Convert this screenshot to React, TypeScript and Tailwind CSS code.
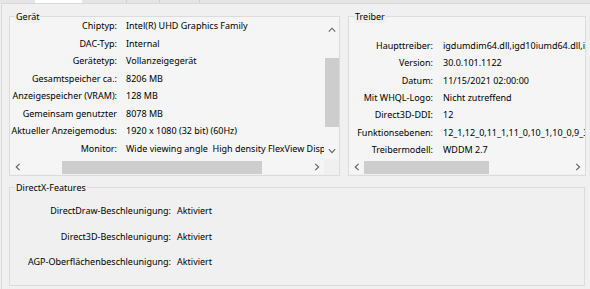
import React from "react";

type Row = { label: string; value: string };

const deviceRows: Row[] = [
  { label: "Chiptyp:", value: "Intel(R) UHD Graphics Family" },
  { label: "DAC-Typ:", value: "Internal" },
  { label: "Gerätetyp:", value: "Vollanzeigegerät" },
  { label: "Gesamtspeicher ca.:", value: "8206 MB" },
  { label: "Anzeigespeicher (VRAM):", value: "128 MB" },
  { label: "Gemeinsam genutzter", value: "8078 MB" },
  { label: "Aktueller Anzeigemodus:", value: "1920 x 1080 (32 bit) (60Hz)" },
  { label: "Monitor:", value: "Wide viewing angle  High density FlexView Display" },
];

const driverRows: Row[] = [
  { label: "Haupttreiber:", value: "igdumdim64.dll,igd10iumd64.dll,igd10iumd64.dll,igd12umd64.dll" },
  { label: "Version:", value: "30.0.101.1122" },
  { label: "Datum:", value: "11/15/2021 02:00:00" },
  { label: "Mit WHQL-Logo:", value: "Nicht zutreffend" },
  { label: "Direct3D-DDI:", value: "12" },
  { label: "Funktionsebenen:", value: "12_1,12_0,11_1,11_0,10_1,10_0,9_3,9_2,9_1" },
  { label: "Treibermodell:", value: "WDDM 2.7" },
];

const featureRows: Row[] = [
  { label: "DirectDraw-Beschleunigung:", value: "Aktiviert" },
  { label: "Direct3D-Beschleunigung:", value: "Aktiviert" },
  { label: "AGP-Oberflächenbeschleunigung:", value: "Aktiviert" },
];

function Chevron({ dir }: { dir: "up" | "down" | "left" | "right" }) {
  const vertical = dir === "up" || dir === "down";
  const points = {
    up: "0.8,4.6 4,1.2 7.2,4.6",
    down: "0.8,1.2 4,4.6 7.2,1.2",
    left: "4.6,0.8 1.2,4 4.6,7.2",
    right: "1.2,0.8 4.6,4 1.2,7.2",
  }[dir];
  return (
    <svg width={vertical ? 8 : 6} height={vertical ? 6 : 8} viewBox={vertical ? "0 0 8 6" : "0 0 6 8"}>
      <polyline points={points} fill="none" stroke="#606060" strokeWidth="1.1" />
    </svg>
  );
}

function HScrollbar({ thumbLeft, thumbWidth }: { thumbLeft: number; thumbWidth: number }) {
  return (
    <div className="flex h-[15px] shrink-0 items-center">
      <div className="flex w-[15px] shrink-0 justify-center">
        <Chevron dir="left" />
      </div>
      <div className="relative h-full flex-1">
        <div
          className="absolute top-[2px] bottom-0 bg-[#cdcdcd]"
          style={{ left: thumbLeft, width: thumbWidth }}
        />
      </div>
      <div className="flex w-[15px] shrink-0 justify-center">
        <Chevron dir="right" />
      </div>
    </div>
  );
}

function GroupBox({
  title,
  className,
  children,
}: {
  title: string;
  className?: string;
  children: React.ReactNode;
}) {
  return (
    <div className={`flex flex-col border border-[#dcdcdc] ${className ?? ""}`}>
      <div className="relative z-10 -mt-[7px] -mb-[6px] ml-[5px] w-fit bg-[#f0f0f0] px-px leading-[13px]">
        {title}
      </div>
      {children}
    </div>
  );
}

export default function App() {
  return (
    <div className="h-[289px] w-[590px] overflow-hidden bg-[#f0f0f0] font-['Noto_Sans',sans-serif] text-[9px] text-black">
      {/* tab strip remnant */}
      <div className="flex h-[3px] bg-[#e5e5e5]">
        <div className="w-[35px]" />
        <div className="w-[47px] bg-white" />
        <div className="w-[45px] border-r border-[#cfcfcf]" />
        <div className="w-[33px] border-r border-[#cfcfcf]" />
        <div className="w-[40px] border-r border-[#cfcfcf]" />
      </div>

      <div className="ml-px h-full border-t border-l border-[#d9d9d9] pt-[12px] pl-[7px]">
        <div className="flex gap-[8px]">
          {/* Gerät */}
          <GroupBox title="Gerät" className="h-[160px] w-[331px]">
            <div className="flex h-[157px] flex-col bg-[#f5f5f5]">
              <div className="flex min-h-0 flex-1">
                <div className="min-w-0 flex-1 overflow-hidden">
                  {deviceRows.map((r) => (
                    <div key={r.label} className="flex h-[17.5px] items-center whitespace-pre">
                      <div className="flex w-[107px] shrink-0 justify-end">{r.label}</div>
                      <div className="pl-[9px]">{r.value}</div>
                    </div>
                  ))}
                </div>
                <div className="flex w-[15px] shrink-0 flex-col items-center">
                  <div className="flex h-[26px] items-center">
                    <Chevron dir="up" />
                  </div>
                  <div className="mt-[15px] h-[69px] w-[14px] bg-[#cdcdcd]" />
                  <div className="mt-auto flex h-[16px] items-center">
                    <Chevron dir="down" />
                  </div>
                </div>
              </div>
              <div className="flex">
                <div className="flex-1">
                  <HScrollbar thumbLeft={37} thumbWidth={200} />
                </div>
                <div className="h-[15px] w-[15px] bg-[#f0f0f0]" />
              </div>
            </div>
          </GroupBox>

          {/* Treiber */}
          <GroupBox title="Treiber" className="h-[160px] w-[238px]">
            <div className="flex h-[157px] flex-col bg-[#f5f5f5]">
              <div className="min-h-0 flex-1 overflow-hidden pt-[20px]">
                {driverRows.map((r) => (
                  <div key={r.label} className="flex h-[17.33px] items-center whitespace-pre">
                    <div className="flex w-[84px] shrink-0 justify-end">{r.label}</div>
                    <div className="pl-[10px]">{r.value}</div>
                  </div>
                ))}
              </div>
              <HScrollbar thumbLeft={0} thumbWidth={125} />
            </div>
          </GroupBox>
        </div>

        {/* DirectX-Features */}
        <GroupBox title="DirectX-Features" className="mt-[11px] h-[99px] w-[576px]">
          <div className="pt-[10px]">
            {featureRows.map((r) => (
              <div key={r.label} className="flex h-[25.5px] items-center whitespace-pre">
                <div className="flex w-[161px] shrink-0 justify-end">{r.label}</div>
                <div className="pl-[6px]">{r.value}</div>
              </div>
            ))}
          </div>
        </GroupBox>
      </div>
    </div>
  );
}
